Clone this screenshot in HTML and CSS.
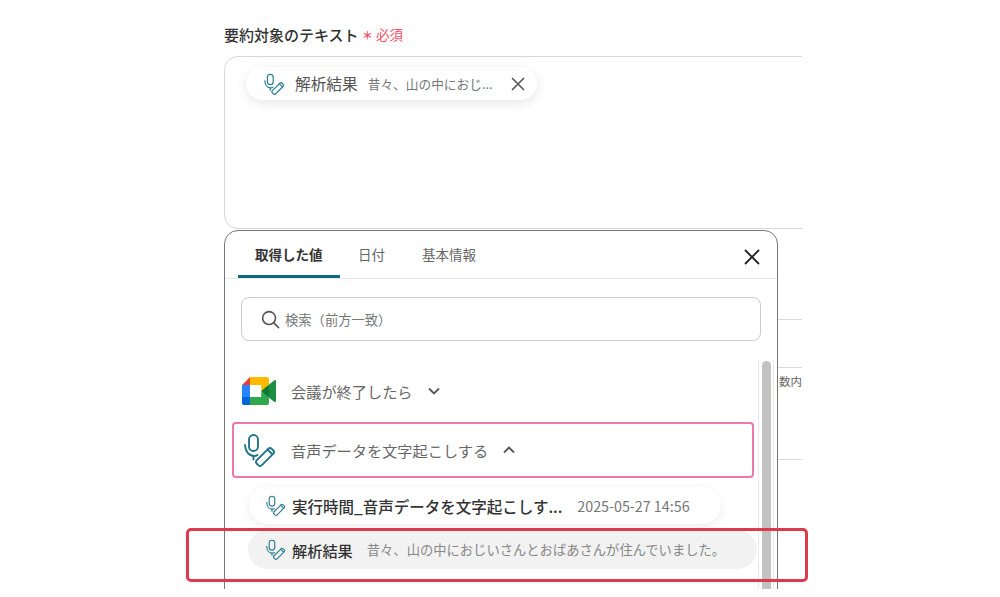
FILE: index.html
```html
<!DOCTYPE html>
<html lang="ja">
<head>
  <meta charset="UTF-8" />
  <meta name="viewport" content="width=device-width, initial-scale=1.0" />
  <title>要約対象のテキスト</title>
  <link rel="stylesheet" href="styles.css">
</head>
<body>
  <svg class="defs" width="0" height="0" aria-hidden="true">
    <symbol id="micPen" viewBox="0 0 32 34">
      <g fill="none" stroke="currentColor" stroke-width="1.9" stroke-linecap="round" stroke-linejoin="round">
        <rect x="5" y="2" width="9" height="16" rx="4.5" />
        <path d="M1 12c.3 6.500 4 11 9 11 1.500 0 2.500-.3 3.500-1" />
        <path d="M9.500 23v3.500" />
        <rect x="10.500" y="20.500" width="21" height="7" rx="2.500" transform="rotate(-45 21 24)" />
        <path d="M23.500 16.500l4.500 4.500" />
      </g>
    </symbol>
  </svg>

  <div class="stage">
    <div class="clip">
      <div class="form">
        <div class="field-label">要約対象のテキスト <span class="req"><b>＊</b><span class="req-text">必須</span></span></div>
        <div class="textbox">
          <div class="token">
            <svg class="token-icon"><use href="#micPen" /></svg>
            <span class="token-name">解析結果</span>
            <span class="token-val">昔々、山の中におじ...</span>
            <svg class="token-x" viewBox="0 0 14 14"><path d="M1 1l12 12M13 1L1 13" /></svg>
          </div>
        </div>
        <div class="behind behind-a"></div>
        <div class="behind behind-b"></div>
        <div class="behind behind-c">数内</div>
      </div>

      <div class="popup">
        <div class="tabs">
          <div class="tab active">取得した値</div>
          <div class="tab">日付</div>
          <div class="tab">基本情報</div>
          <svg class="close" viewBox="0 0 16 16"><path d="M1 1l14 14M15 1L1 15" /></svg>
        </div>
        <div class="search">
          <svg class="search-icon" viewBox="0 0 20 20"><circle cx="8.500" cy="8.500" r="6.800" /><path d="M13.500 13.500l5 5" /></svg>
          <span>検索（前方一致）</span>
        </div>
        <div class="list">
          <div class="items">
            <div class="row">
              <svg class="meet" viewBox="0 0 87.500 72">
                <path fill="#0f7a35" d="M49.500 36l8.530 9.750 11.470 7.330 2-17.020-2-16.640-11.690 6.440z" />
                <path fill="#0066da" d="M0 51.500V66c0 3.315 2.685 6 6 6h14.500l3-10.960-3-9.540-9.950-3z" />
                <path fill="#e94235" d="M20.500 0L0 20.500l10.550 3 9.950-3 2.950-9.410z" />
                <path fill="#2684fc" d="M20.500 20.500H0v31h20.500z" />
                <path fill="#1c8f45" d="M82.600 8.680L69.500 19.420v33.660l13.160 10.790c1.970 1.540 4.850.135 4.850-2.370V11c0-2.535-2.945-3.925-4.910-2.320z" />
                <path fill="#2fa84f" d="M49.500 36v15.500h-29V72h43c3.315 0 6-2.685 6-6V53.080z" />
                <path fill="#ffba00" d="M63.500 0h-43v20.500h29V36l20-16.570V6c0-3.315-2.685-6-6-6z" />
              </svg>
              <span class="row-title">会議が終了したら</span>
              <svg class="chev" viewBox="0 0 12 8"><path d="M1 1.500l5 5 5-5" /></svg>
            </div>
            <div class="row row-open">
              <svg class="row-icon"><use href="#micPen" /></svg>
              <span class="row-title">音声データを文字起こしする</span>
              <svg class="chev" viewBox="0 0 12 8"><path d="M1 6.500l5-5 5 5" /></svg>
            </div>
            <div class="value value-white">
              <svg class="value-icon"><use href="#micPen" /></svg>
              <span class="value-name">実行時間_音声データを文字起こしす...</span>
              <span class="value-time">2025-05-27 14:56</span>
            </div>
            <div class="value value-grey">
              <svg class="value-icon"><use href="#micPen" /></svg>
              <span class="value-name value-short">解析結果</span>
              <span class="value-desc">昔々、山の中におじいさんとおばあさんが住んでいました。</span>
            </div>
          </div>
          <div class="track"><div class="thumb"></div></div>
        </div>
      </div>
    </div>
    <div class="mark"></div>
  </div>
</body>
</html>
```

FILE: styles.css
```css
/* Base */
* { margin: 0; padding: 0; box-sizing: border-box; }
body { font-family: "Noto Sans CJK JP", "Noto Sans", sans-serif; background: #fff; color: #333; overflow: hidden; }
.defs { position: absolute; }

/* Stage: the cropped form */
.stage { position: relative; width: 578px; height: 597px; margin-left: 224px; }
.clip { position: relative; height: 589px; overflow: hidden; }

/* Form behind the popup */
.form { padding-top: 23px; width: 640px; }
.field-label { height: 33px; font-size: 15px; line-height: 22px; font-weight: 500; color: #333; white-space: nowrap; }
.req { color: #f4506a; font-weight: 400; }
.req b { font-size: 11px; font-weight: 700; vertical-align: 1px; }
.req-text { margin-left: 3px; font-size: 13.5px; vertical-align: 1px; }
.textbox { height: 173px; padding: 10px 21px; border: 1px solid #d3d8df; border-radius: 14px; }
.token { display: flex; align-items: center; width: 291px; height: 33px; padding-left: 18px; background: #fff; border-radius: 17px; box-shadow: 0 3px 12px rgba(0,0,0,0.1); }
.token-icon { width: 21px; height: 22px; flex: none; color: #2f7f95; }
.token-name { margin-left: 10px; font-size: 15.7px; color: #555; }
.token-val { margin-left: 10px; font-size: 12.7px; color: #777; white-space: nowrap; }
.token-x { width: 14px; height: 14px; margin-left: 18px; fill: none; stroke: #555; stroke-width: 1.6; }
.behind { border-bottom: 1px solid #d6dbe2; }
.behind-a { height: 91px; }
.behind-b { height: 48px; }
.behind-c { height: 92px; padding: 4px 0 0 555px; font-size: 11.500px; line-height: 18px; color: #666; white-space: nowrap; }

/* Popup */
.popup { position: absolute; left: 0; top: 230px; width: 554px; height: 380px; background: #fff; border: 1.5px solid #777; border-radius: 14px; }
.tabs { position: relative; display: flex; height: 48px; padding-left: 13px; border-bottom: 1px solid #e6e8ec; }
.tab { padding: 13px 17px 0; font-size: 13.5px; line-height: 20px; color: #666; }
.tab + .tab { padding: 13px 0 0; margin-left: 18px; }
.tab + .tab + .tab { margin-left: 37px; }
.tab.active { width: 102px; font-weight: 700; color: #333; border-bottom: 3px solid #0f6a80; border-radius: 3px 3px 0 0; }
.close { position: absolute; right: 17px; top: 18px; width: 16px; height: 16px; fill: none; stroke: #222; stroke-width: 1.8; }
.search { display: flex; align-items: center; height: 44px; margin: 18px 16px 0; padding-left: 19px; border: 1px solid #ccc; border-radius: 8px; font-size: 13.300px; color: #777; }
.search-icon { width: 19px; height: 19px; margin-right: 5px; fill: none; stroke: #555; stroke-width: 1.7; stroke-linecap: round; }

/* List */
.list { display: flex; gap: 1px; margin-top: 18px; padding-left: 7px; }
.items { width: 525px; padding-top: 4px; }
.row { display: flex; align-items: center; width: 522px; height: 56px; padding-left: 10px; }
.row + .row { margin-top: 3px; }
.row-open { border: 2px solid #ee78ab; border-radius: 4px; }
.meet { width: 34px; height: 28px; flex: none; }
.row-icon { width: 32px; height: 34px; color: #1f7488; flex: none; }
.row-title { margin-left: 15px; font-size: 15.2px; color: #666; }
.chev { width: 12px; height: 8px; margin-left: 15px; fill: none; stroke: #555; stroke-width: 1.8; }
.value { display: flex; align-items: center; white-space: nowrap; border-radius: 20px; }
.value-white { width: 472px; height: 37px; margin: 9px 0 0 17px; padding-left: 17px; background: #fff; box-shadow: 0 2px 10px rgba(0,0,0,0.08); }
.value-grey { width: 509px; height: 39px; margin: 6px 0 0 16px; padding-left: 18px; background: #f2f2f2; }
.value-icon { width: 20px; height: 21px; flex: none; color: #2f7f95; }
.value-name { margin-left: 6px; font-size: 15.5px; font-weight: 500; color: #333; }
.value-short { font-size: 15.2px; }
.value-time { margin-left: 15px; font-size: 14.3px; color: #777; }
.value-desc { margin-left: 14px; font-size: 13.300px; color: #888; }

/* Scrollbar */
.track { width: 16px; height: 260px; padding: 2px 0 0 3px; border-left: 1px solid #e8e8e8; border-right: 1px solid #e8e8e8; }
.thumb { width: 9px; height: 260px; background: #c2c2c2; border-radius: 5px; }

/* Red annotation over the shot */
.mark { position: absolute; left: -38px; top: 528px; width: 622px; height: 54px; border: 3px solid #dc3b4c; border-radius: 5px; }
```
